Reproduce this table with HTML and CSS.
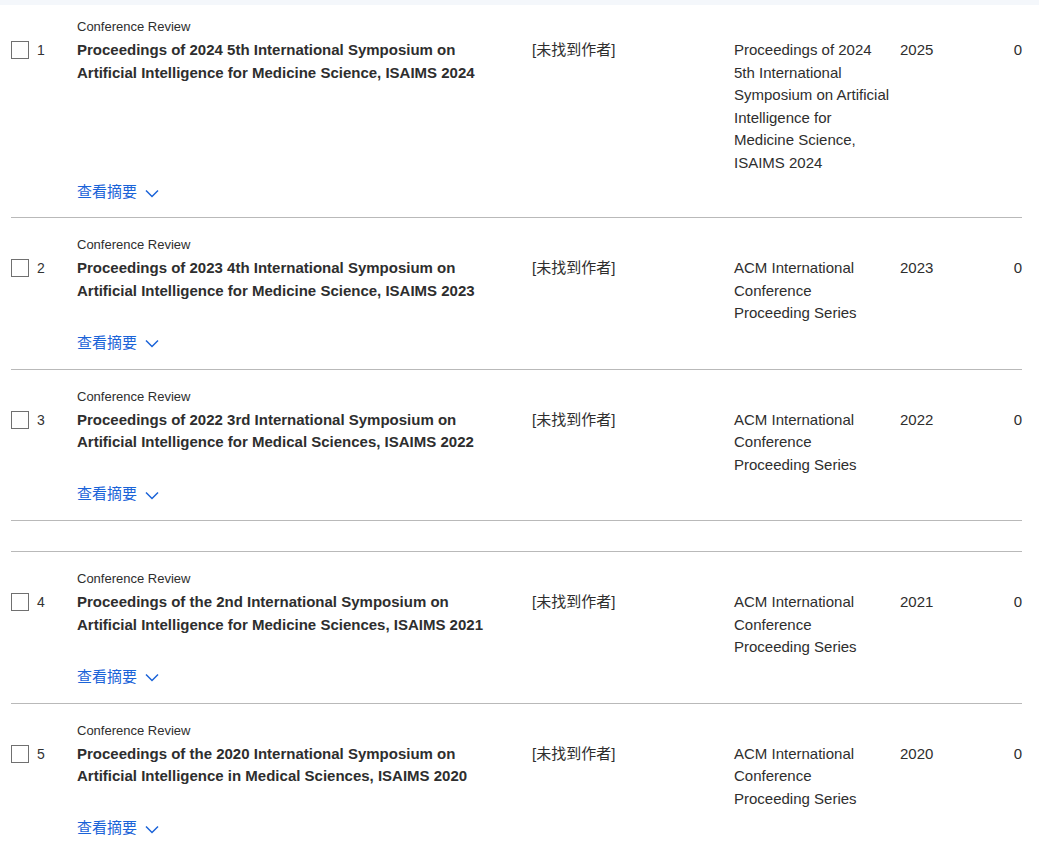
FILE: index.html
```html
<!DOCTYPE html>
<html lang="zh">
<head>
<meta charset="utf-8">
<title>Results</title>
<link rel="stylesheet" href="styles.css">
</head>
<body>
<div class="topbar"></div>
<div class="list">
  <div class="item first">
    <div class="grid">
      <div class="cell check"><span class="box"></span></div>
      <div class="cell num">1</div>
      <div class="cell main">
        <div class="type">Conference Review</div>
        <div class="title">Proceedings of 2024 5th International Symposium on Artificial Intelligence for Medicine Science, ISAIMS 2024</div>
      </div>
      <div class="cell author">[未找到作者]</div>
      <div class="cell source">Proceedings of 2024 5th International Symposium on Artificial Intelligence for Medicine Science, ISAIMS 2024</div>
      <div class="cell year">2025</div>
      <div class="cell count">0</div>
    </div>
    <div class="toggle">查看摘要 <svg class="chev" width="14" height="9" viewBox="0 0 14 9"><path d="M1 1.5 L7 7.5 L13 1.5" fill="none" stroke="#1a63d8" stroke-width="1.5"/></svg></div>
  </div>

  <div class="item">
    <div class="grid">
      <div class="cell check"><span class="box"></span></div>
      <div class="cell num">2</div>
      <div class="cell main">
        <div class="type">Conference Review</div>
        <div class="title">Proceedings of 2023 4th International Symposium on Artificial Intelligence for Medicine Science, ISAIMS 2023</div>
      </div>
      <div class="cell author">[未找到作者]</div>
      <div class="cell source">ACM International Conference Proceeding Series</div>
      <div class="cell year">2023</div>
      <div class="cell count">0</div>
    </div>
    <div class="toggle">查看摘要 <svg class="chev" width="14" height="9" viewBox="0 0 14 9"><path d="M1 1.5 L7 7.5 L13 1.5" fill="none" stroke="#1a63d8" stroke-width="1.5"/></svg></div>
  </div>

  <div class="item">
    <div class="grid">
      <div class="cell check"><span class="box"></span></div>
      <div class="cell num">3</div>
      <div class="cell main">
        <div class="type">Conference Review</div>
        <div class="title">Proceedings of 2022 3rd International Symposium on Artificial Intelligence for Medical Sciences, ISAIMS 2022</div>
      </div>
      <div class="cell author">[未找到作者]</div>
      <div class="cell source">ACM International Conference Proceeding Series</div>
      <div class="cell year">2022</div>
      <div class="cell count">0</div>
    </div>
    <div class="toggle">查看摘要 <svg class="chev" width="14" height="9" viewBox="0 0 14 9"><path d="M1 1.5 L7 7.5 L13 1.5" fill="none" stroke="#1a63d8" stroke-width="1.5"/></svg></div>
  </div>

  <div class="item empty"></div>

  <div class="item">
    <div class="grid">
      <div class="cell check"><span class="box"></span></div>
      <div class="cell num">4</div>
      <div class="cell main">
        <div class="type">Conference Review</div>
        <div class="title">Proceedings of the 2nd International Symposium on Artificial Intelligence for Medicine Sciences, ISAIMS 2021</div>
      </div>
      <div class="cell author">[未找到作者]</div>
      <div class="cell source">ACM International Conference Proceeding Series</div>
      <div class="cell year">2021</div>
      <div class="cell count">0</div>
    </div>
    <div class="toggle">查看摘要 <svg class="chev" width="14" height="9" viewBox="0 0 14 9"><path d="M1 1.5 L7 7.5 L13 1.5" fill="none" stroke="#1a63d8" stroke-width="1.5"/></svg></div>
  </div>

  <div class="item">
    <div class="grid">
      <div class="cell check"><span class="box"></span></div>
      <div class="cell num">5</div>
      <div class="cell main">
        <div class="type">Conference Review</div>
        <div class="title">Proceedings of the 2020 International Symposium on Artificial Intelligence in Medical Sciences, ISAIMS 2020</div>
      </div>
      <div class="cell author">[未找到作者]</div>
      <div class="cell source">ACM International Conference Proceeding Series</div>
      <div class="cell year">2020</div>
      <div class="cell count">0</div>
    </div>
    <div class="toggle">查看摘要 <svg class="chev" width="14" height="9" viewBox="0 0 14 9"><path d="M1 1.5 L7 7.5 L13 1.5" fill="none" stroke="#1a63d8" stroke-width="1.5"/></svg></div>
  </div>
</div>
</body>
</html>
```

FILE: styles.css
```css
html, body {
  margin: 0;
  padding: 0;
  background: #ffffff;
}
body {
  font-family: "Liberation Sans", Arial, "Noto Sans CJK SC", sans-serif;
  color: #2e2e2e;
  font-size: 15px;
}
.topbar {
  height: 5px;
  background: #f4f7fb;
}
.list {
  margin-left: 11px;
  width: 1011px;
}
.item {
  padding: 18px 0 15px 0;
  border-bottom: 1px solid #b9b9b9;
}
.item.first {
  padding-top: 13px;
  padding-bottom: 14px;
}
.item.empty {
  padding: 0;
  height: 30px;
}
.grid {
  display: grid;
  grid-template-columns: 26px 40px 455px 202px 166px 60px 1fr;
  align-items: start;
}
.cell {
  padding-top: 21px;
  line-height: 22.5px;
}
.cell.main {
  padding-top: 0;
}
.check {
  display: flex;
  align-items: center;
  height: 22.5px;
}
.box {
  display: block;
  width: 16px;
  height: 16px;
  border: 1.5px solid #707070;
  background: #fff;
}
.num {
  font-size: 14px;
  color: #333;
}
.type {
  font-size: 13px;
  line-height: 18px;
  margin-bottom: 3px;
  color: #2e2e2e;
}
.title {
  font-weight: bold;
  line-height: 22.5px;
  max-width: 425px;
  color: #2e2e2e;
}
.author {
  color: #2e2e2e;
}
.source {
  padding-right: 10px;
  color: #2e2e2e;
}
.count {
  text-align: right;
}
.toggle {
  margin-top: 7px;
  margin-left: 66px;
  line-height: 22px;
  color: #1a63d8;
  display: flex;
  align-items: center;
  gap: 8px;
}
.chev {
  display: block;
  margin-top: 2px;
}
```
